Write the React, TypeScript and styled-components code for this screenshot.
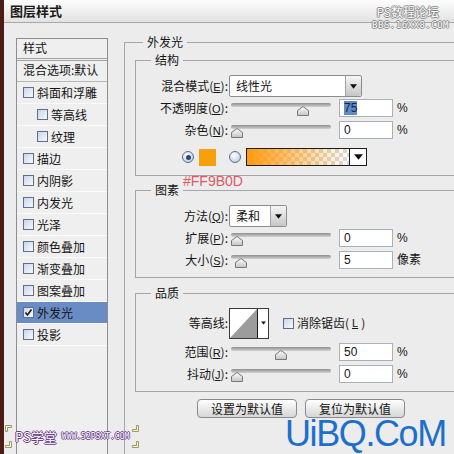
import styled, { createGlobalStyle } from "styled-components";

const GlobalStyle = createGlobalStyle`
  html, body {
    margin: 0;
    padding: 0;
  }
  body {
    background: #ececec;
    font-family: "Noto Sans CJK SC", "Noto Sans", sans-serif;
    font-size: 12px;
    color: #141414;
  }
`

const Window = styled.div`
  position: relative;
  width: 454px;
  height: 454px;
  overflow: hidden;
  box-sizing: border-box;
  background: #ececec;
  border-left: 4px solid #4d1d15;
`

const TitleBar = styled.div`
  height: 22px;
  display: flex;
  align-items: center;
  padding-left: 6px;
  border-bottom: 1px solid #a9a9a9;
  background: linear-gradient(#fdfdfd, #e2e2e2);
`

const Title = styled.span`
  font-size: 13px;
  font-weight: bold;
  line-height: 16px;
  color: #1a1a1a;
`

const Body = styled.div`
  display: flex;
  align-items: flex-start;
`

const Sidebar = styled.div`
  flex-shrink: 0;
  width: 92px;
  margin: 15px 0 0 12px;
`

const StyleList = styled.div`
  height: 420px;
  box-sizing: border-box;
  border: 1px solid #8e8e8e;
  border-bottom: none;
  background: #efefef;
`

const ListHeader = styled.div`
  height: 22px;
  box-sizing: border-box;
  padding: 2px 0 0 6px;
  line-height: 14px;
  border-bottom: 3px double #a4a4a4;
`

const BlendRow = styled.div`
  height: 21px;
  box-sizing: border-box;
  padding: 2px 0 0 6px;
  line-height: 14px;
  border-bottom: 1px solid #b8b8b8;
  white-space: nowrap;
`

const ListItem = styled.div<{ $active?: boolean; $indent?: boolean }>`
  height: 22px;
  box-sizing: border-box;
  display: flex;
  align-items: center;
  gap: 3px;
  padding-left: ${(p) => (p.$indent ? 20 : 6)}px;
  border-bottom: 1px solid #fbfbfb;
  line-height: 14px;
  background: ${(p) => (p.$active ? "#6a8cc5" : "transparent")};
`

const CheckBox = styled.span`
  width: 11px;
  height: 11px;
  box-sizing: border-box;
  flex-shrink: 0;
  border: 1px solid #5c6f8c;
  background: linear-gradient(135deg, #c9d6e8, #f7f9fc);
  display: flex;
  align-items: center;
  justify-content: center;
`

const Main = styled.div`
  flex-shrink: 0;
  margin: 12px 0 0 16px;
`

const OuterGroup = styled.fieldset`
  margin: 0;
  padding: 0 10px;
  width: 350px;
  height: 440px;
  box-sizing: border-box;
  min-width: 0;
  border: 1px solid #a6a6a6;
`

const Legend = styled.legend<{ $offset: number }>`
  margin-left: ${(p) => p.$offset}px;
  padding: 0 4px;
  line-height: 14px;
  font-size: 12px;
`

const Group = styled.fieldset<{ $gap: number; $top: number; $bottom: number }>`
  margin: ${(p) => p.$gap}px 0 0;
  padding: ${(p) => p.$top}px 0 ${(p) => p.$bottom}px;
  min-width: 0;
  border: 1px solid #a6a6a6;
`

const Row = styled.div<{ $height?: number; $gap?: number }>`
  display: grid;
  grid-template-columns: 92px auto;
  column-gap: 1px;
  align-items: center;
  height: ${(p) => p.$height ?? 22}px;
  margin-top: ${(p) => p.$gap ?? 0}px;
`

const Label = styled.span`
  text-align: right;
  white-space: nowrap;
  line-height: 14px;
`

const Key = styled.span`
  font-family: "Liberation Sans", sans-serif;
  font-size: 11px;
  text-decoration: underline;
`

const Controls = styled.div`
  display: flex;
  align-items: center;
`

const Select = styled.div<{ $width: number }>`
  display: flex;
  width: ${(p) => p.$width}px;
  height: 22px;
  box-sizing: border-box;
  border: 1px solid #8c8c8c;
  border-radius: 2px;
  background: #fff;
`

const SelectValue = styled.span`
  flex: 1;
  padding-left: 6px;
  line-height: 20px;
`

const SelectArrow = styled.span`
  width: 15px;
  display: flex;
  align-items: center;
  justify-content: center;
  border-left: 1px solid #a3a3a3;
  border-radius: 0 2px 2px 0;
  background: linear-gradient(#f6f6f6, #c6c6c6);
`

const Slider = styled.div`
  position: relative;
  width: 100px;
  height: 16px;
  margin-left: 2px;
`

const Track = styled.div`
  position: absolute;
  left: 0;
  right: 0;
  top: 3px;
  height: 4px;
  border-radius: 2px;
  background: linear-gradient(#8e8e8e, #d2d2d2);
`

const Thumb = styled.svg`
  position: absolute;
  top: 6px;
`

const NumberBox = styled.div`
  width: 54px;
  height: 18px;
  box-sizing: border-box;
  margin-left: 8px;
  padding-left: 4px;
  border: 1px solid #a9b0ba;
  background: #fff;
  font-family: "Liberation Sans", sans-serif;
  font-size: 12px;
  line-height: 16px;
`

const Selected = styled.span`
  background: #6589c6;
  color: #10264e;
`

const Unit = styled.span`
  margin-left: 4px;
  line-height: 14px;
  font-family: "Liberation Sans", "Noto Sans CJK SC", sans-serif;
`

const ColorRow = styled.div`
  display: flex;
  align-items: center;
  gap: 5px;
  height: 20px;
  margin-top: 6px;
  padding-left: 46px;
`

const Radio = styled.span<{ $on?: boolean }>`
  width: 12px;
  height: 12px;
  box-sizing: border-box;
  border-radius: 50%;
  border: 1px solid #5d6f88;
  background: radial-gradient(circle at 40% 35%, #ffffff, #c3d1e4 75%);
  display: flex;
  align-items: center;
  justify-content: center;

  &::after {
    content: "";
    width: 5px;
    height: 5px;
    border-radius: 50%;
    background: ${(p) => (p.$on ? "#2b4a78" : "transparent")};
  }
`

const Swatch = styled.span`
  width: 17px;
  height: 17px;
  margin-right: 8px;
  background: #f7a00b;
`

const GradientPicker = styled.div`
  display: flex;
  width: 121px;
  height: 18px;
  box-sizing: border-box;
  border: 1px solid #1c1c1c;
`

const GradientFill = styled.span`
  flex: 1;
  background: linear-gradient(to right, #ff9b0d, rgba(255, 155, 13, 0)),
    repeating-conic-gradient(#ffffff 0 25%, #d9d9d9 0 50%) 0 0 / 8px 8px;
`

const PickerArrow = styled.span<{ $width: number }>`
  width: ${(p) => p.$width}px;
  display: flex;
  align-items: center;
  justify-content: center;
  border-left: 1px solid #1c1c1c;
  background: #fff;
`

const ContourPicker = styled.div`
  display: flex;
  width: 40px;
  height: 31px;
  box-sizing: border-box;
  border: 1px solid #3a3a3a;
  background: #fff;
`

const ContourPreview = styled.svg`
  flex: 1;
  height: 100%;
`

const AntiAlias = styled.label`
  display: flex;
  align-items: center;
  gap: 3px;
  margin-left: 14px;
  line-height: 14px;
`

const ButtonRow = styled.div`
  display: flex;
  gap: 8px;
  margin-top: 7px;
  padding-left: 62px;
`

const Button = styled.button`
  width: 100px;
  height: 19px;
  padding: 0;
  border: 1px solid #8a8a8a;
  border-radius: 4px;
  background: linear-gradient(#ffffff, #d6d6d6);
  font-family: "Noto Sans CJK SC", sans-serif;
  font-size: 12px;
  line-height: 16px;
  color: #141414;
`

const HexNote = styled.span`
  position: absolute;
  left: 179px;
  top: 173px;
  font-family: "Liberation Sans", sans-serif;
  font-size: 14px;
  color: #dc5a68;
`

const ForumMark = styled.div`
  position: absolute;
  top: 5px;
  right: 5px;
  display: flex;
  flex-direction: column;
  align-items: flex-end;
  gap: 2px;
  color: #fbfbfb;
  text-shadow: 1px 0 #8a8a8a, -1px 0 #8a8a8a, 0 1px #8a8a8a, 0 -1px #8a8a8a;
`

const ForumName = styled.span`
  font-size: 12px;
  line-height: 13px;
  margin-right: 10px;
`

const ForumUrl = styled.span`
  font-family: "DejaVu Sans Mono", monospace;
  font-size: 9px;
  line-height: 10px;
  letter-spacing: 0.5px;
`

const SchoolMark = styled.div`
  position: absolute;
  left: 1px;
  top: 425px;
  display: flex;
  align-items: center;
  gap: 3px;
  color: #ffffff;
  text-shadow: 1px 0 #6b3d8c, -1px 0 #6b3d8c, 0 1px #6b3d8c, 0 -1px #6b3d8c;
`

const Corners = styled.div`
  display: flex;
  flex-direction: column;
  gap: 9px;
`

const SchoolName = styled.span`
  font-size: 13px;
  line-height: 14px;
`

const SchoolUrl = styled.span`
  font-family: "DejaVu Sans Mono", monospace;
  font-size: 8px;
  line-height: 10px;
  margin-left: 2px;
`

const BrandMark = styled.span`
  position: absolute;
  left: 281px;
  top: 421px;
  font-family: "Liberation Sans", sans-serif;
  font-size: 36px;
  line-height: 25px;
  letter-spacing: -1.4px;
  color: #1c6fcc;
`

const DownArrow = ({ w = 7 }: { w?: number }) => (
  <svg width={w} height={Math.ceil(w / 2) + 1} viewBox="0 0 8 5">
    <polygon points="0,0 8,0 4,5" fill="#111" />
  </svg>
)

const Check = () => (
  <svg width="9" height="9" viewBox="0 0 9 9">
    <polyline points="1.5,4.5 3.5,7 7.5,1.5" fill="none" stroke="#1a1a1a" strokeWidth="1.6" />
  </svg>
)

const Corner = ({ flip }: { flip?: boolean }) => (
  <svg width="7" height="7" viewBox="0 0 7 7" style={flip ? { transform: "rotate(180deg)" } : undefined}>
    <path d="M0.5 6.5V0.5H6.5V2.5H2.5V6.5Z" fill="#f4f0c8" stroke="#9a9a6a" />
  </svg>
)

const SliderControl = ({ value }: { value: number }) => (
  <Slider>
    <Track />
    <Thumb width="12" height="10" viewBox="0 0 12 10" style={{ left: `${value * 0.88}px` }}>
      <defs>
        <linearGradient id="thumbFill" x1="0" y1="0" x2="0" y2="1">
          <stop offset="0" stopColor="#ffffff" />
          <stop offset="1" stopColor="#c4c4c4" />
        </linearGradient>
      </defs>
      <polygon points="0.5,9.5 0.5,4.5 6,0.5 11.5,4.5 11.5,9.5" fill="url(#thumbFill)" stroke="#787878" />
    </Thumb>
  </Slider>
)

interface SliderRowProps {
  label: string;
  hotkey: string;
  value: number;
  unit: string;
  highlight?: boolean;
  gap?: number;
}

const SliderRow = ({ label, hotkey, value, unit, highlight, gap }: SliderRowProps) => (
  <Row $gap={gap}>
    <Label>
      {label}(<Key>{hotkey}</Key>):
    </Label>
    <Controls>
      <SliderControl value={value} />
      <NumberBox>{highlight ? <Selected>{value}</Selected> : value}</NumberBox>
      <Unit>{unit}</Unit>
    </Controls>
  </Row>
)

const effects = [
  { name: "斜面和浮雕" },
  { name: "等高线", indent: true },
  { name: "纹理", indent: true },
  { name: "描边" },
  { name: "内阴影" },
  { name: "内发光" },
  { name: "光泽" },
  { name: "颜色叠加" },
  { name: "渐变叠加" },
  { name: "图案叠加" },
  { name: "外发光", checked: true },
  { name: "投影" },
]

const App = () => {
  return (
    <>
      <GlobalStyle />
      <Window>
        <TitleBar>
          <Title>图层样式</Title>
        </TitleBar>
        <Body>
          <Sidebar>
            <StyleList>
              <ListHeader>样式</ListHeader>
              <BlendRow>混合选项:默认</BlendRow>
              {effects.map((fx) => (
                <ListItem key={fx.name} $indent={fx.indent} $active={fx.checked}>
                  <CheckBox>{fx.checked && <Check />}</CheckBox>
                  {fx.name}
                </ListItem>
              ))}
            </StyleList>
          </Sidebar>
          <Main>
            <OuterGroup>
              <Legend $offset={8}>外发光</Legend>

              <Group $gap={4} $top={8} $bottom={8}>
                <Legend $offset={15}>结构</Legend>
                <Row>
                  <Label>
                    混合模式(<Key>E</Key>):
                  </Label>
                  <Controls>
                    <Select $width={133}>
                      <SelectValue>线性光</SelectValue>
                      <SelectArrow>
                        <DownArrow />
                      </SelectArrow>
                    </Select>
                  </Controls>
                </Row>
                <SliderRow label="不透明度" hotkey="O" value={75} unit="%" highlight />
                <SliderRow label="杂色" hotkey="N" value={0} unit="%" />
                <ColorRow>
                  <Radio $on />
                  <Swatch />
                  <Radio />
                  <GradientPicker>
                    <GradientFill />
                    <PickerArrow $width={16}>
                      <DownArrow w={9} />
                    </PickerArrow>
                  </GradientPicker>
                </ColorRow>
              </Group>

              <Group $gap={7} $top={8} $bottom={6}>
                <Legend $offset={15}>图素</Legend>
                <Row>
                  <Label>
                    方法(<Key>Q</Key>):
                  </Label>
                  <Controls>
                    <Select $width={58}>
                      <SelectValue>柔和</SelectValue>
                      <SelectArrow>
                        <DownArrow />
                      </SelectArrow>
                    </Select>
                  </Controls>
                </Row>
                <SliderRow label="扩展" hotkey="P" value={0} unit="%" />
                <SliderRow label="大小" hotkey="S" value={5} unit="像素" />
              </Group>

              <Group $gap={8} $top={7} $bottom={6}>
                <Legend $offset={15}>品质</Legend>
                <Row $height={32}>
                  <Label>等高线:</Label>
                  <Controls>
                    <ContourPicker>
                      <ContourPreview viewBox="0 0 29 29" preserveAspectRatio="none">
                        <polygon points="0,29 29,0 29,29" fill="#9c9c9c" />
                      </ContourPreview>
                      <PickerArrow $width={10}>
                        <DownArrow w={5} />
                      </PickerArrow>
                    </ContourPicker>
                    <AntiAlias>
                      <CheckBox />
                      消除锯齿(<Key>L</Key>)
                    </AntiAlias>
                  </Controls>
                </Row>
                <SliderRow label="范围" hotkey="R" value={50} unit="%" gap={2} />
                <SliderRow label="抖动" hotkey="J" value={0} unit="%" />
              </Group>

              <ButtonRow>
                <Button>设置为默认值</Button>
                <Button>复位为默认值</Button>
              </ButtonRow>
            </OuterGroup>
          </Main>
        </Body>

        <HexNote>#FF9B0D</HexNote>

        <ForumMark>
          <ForumName>PS数程论坛</ForumName>
          <ForumUrl>BBS.16XX8.COM</ForumUrl>
        </ForumMark>

        <SchoolMark>
          <Corners>
            <Corner />
            <Corner flip />
          </Corners>
          <SchoolName>PS学堂</SchoolName>
          <SchoolUrl>WWW.52PSXT.COM</SchoolUrl>
          <Corners>
            <Corner flip />
            <Corner flip />
          </Corners>
        </SchoolMark>

        <BrandMark>UiBQ.CoM</BrandMark>
      </Window>
    </>
  )
}

export default App;
